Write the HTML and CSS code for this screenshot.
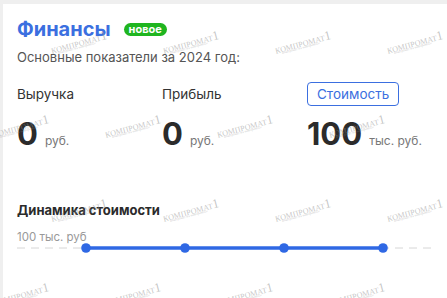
FILE: index.html
```html
<!DOCTYPE html>
<html lang="ru">
<head>
    <meta charset="UTF-8">
    <meta name="viewport" content="width=device-width, initial-scale=1.0">
    <title>Финансы</title>
    <link rel="stylesheet" href="styles.css">
</head>
<body>
    <div class="card">
        <div class="titleRow">
            <h1>Финансы</h1>
            <span class="badge">новое</span>
        </div>
        <p class="subtitle">Основные показатели за 2024 год:</p>

        <div class="stats">
            <div class="stat">
                <div class="statHead"><span class="label">Выручка</span></div>
                <div class="value"><b>0</b><span>руб.</span></div>
            </div>
            <div class="stat">
                <div class="statHead"><span class="label">Прибыль</span></div>
                <div class="value"><b>0</b><span>руб.</span></div>
            </div>
            <div class="stat">
                <div class="statHead"><button class="tab">Стоимость</button></div>
                <div class="value"><b>100</b><span>тыс. руб.</span></div>
            </div>
        </div>

        <h2 class="chartTitle">Динамика стоимости</h2>
        <div class="chart">
            <span class="axisLabel">100 тыс. руб</span>
            <svg class="chartSvg" width="430" height="20" viewBox="0 0 430 20">
                <line x1="0" y1="10" x2="418" y2="10" stroke="#d6d6d6" stroke-width="1" stroke-dasharray="8 6"/>
                <line x1="69" y1="10" x2="366" y2="10" stroke="#2f68e4" stroke-width="3.5"/>
                <circle cx="69" cy="10" r="4.8" fill="#2f68e4"/>
                <circle cx="168" cy="10" r="4.8" fill="#2f68e4"/>
                <circle cx="267" cy="10" r="4.8" fill="#2f68e4"/>
                <circle cx="366" cy="10" r="4.8" fill="#2f68e4"/>
            </svg>
        </div>
    </div>

    <div class="marks">
        <div class="markRow odd">
            <span class="mark">КОМПРОМАТ<i>1</i><small>компромат на компромисс</small></span>
            <span class="mark">КОМПРОМАТ<i>1</i><small>компромат на компромисс</small></span>
            <span class="mark">КОМПРОМАТ<i>1</i><small>компромат на компромисс</small></span>
            <span class="mark">КОМПРОМАТ<i>1</i><small>компромат на компромисс</small></span>
        </div>
        <div class="markRow even">
            <span class="mark">КОМПРОМАТ<i>1</i><small>компромат на компромисс</small></span>
            <span class="mark">КОМПРОМАТ<i>1</i><small>компромат на компромисс</small></span>
            <span class="mark">КОМПРОМАТ<i>1</i><small>компромат на компромисс</small></span>
            <span class="mark">КОМПРОМАТ<i>1</i><small>компромат на компромисс</small></span>
        </div>
        <div class="markRow odd">
            <span class="mark">КОМПРОМАТ<i>1</i><small>компромат на компромисс</small></span>
            <span class="mark">КОМПРОМАТ<i>1</i><small>компромат на компромисс</small></span>
            <span class="mark">КОМПРОМАТ<i>1</i><small>компромат на компромисс</small></span>
            <span class="mark">КОМПРОМАТ<i>1</i><small>компромат на компромисс</small></span>
        </div>
        <div class="markRow even">
            <span class="mark">КОМПРОМАТ<i>1</i><small>компромат на компромисс</small></span>
            <span class="mark">КОМПРОМАТ<i>1</i><small>компромат на компромисс</small></span>
            <span class="mark">КОМПРОМАТ<i>1</i><small>компромат на компромисс</small></span>
            <span class="mark">КОМПРОМАТ<i>1</i><small>компромат на компромисс</small></span>
        </div>
    </div>
</body>
</html>
```

FILE: styles.css
```css
html, body {
    margin: 0;
    height: 100%;
    overflow: hidden;
}
body {
    background: #efefef;
    font-family: Inter, "Noto Sans", sans-serif;
    color: #333;
    position: relative;
}

.card {
    margin: 4px 0 0 3px;
    background: #fff;
    height: 100%;
    padding: 10px 14px 0 14px;
    box-sizing: border-box;
}

.titleRow {
    display: flex;
    align-items: center;
    gap: 13px;
    height: 30px;
}
h1 {
    margin: 0;
    font-size: 20px;
    font-weight: 700;
    color: #3b6fe0;
}
.badge {
    background: #1fb51f;
    color: #fff;
    font-size: 11px;
    font-weight: 700;
    line-height: 13px;
    padding: 0 5px;
    border-radius: 7px;
}
.subtitle {
    margin: 4px 0 0 0;
    font-size: 13px;
    color: #555;
    line-height: 18px;
}

.stats {
    display: grid;
    grid-template-columns: 145px 145px 145px;
    margin-top: 15px;
}
.statHead {
    height: 25px;
    display: flex;
    align-items: center;
}
.label {
    font-size: 13.5px;
    color: #333;
}
.tab {
    font-family: inherit;
    font-size: 13.5px;
    color: #3b6fe0;
    background: #fff;
    border: 1px solid #3b6fe0;
    border-radius: 4px;
    padding: 0 9px;
    height: 24px;
}
.value {
    margin-top: 11px;
    display: flex;
    align-items: baseline;
    gap: 7px;
}
.value b {
    font-size: 31px;
    font-weight: 700;
    color: #2b2b2b;
    line-height: 34px;
}
.value span {
    font-size: 12px;
    color: #777;
}

.chartTitle {
    margin: 51px 0 0 0;
    font-size: 13px;
    font-weight: 700;
    color: #2b2b2b;
}
.chart {
    margin-top: 12px;
    height: 40px;
}
.axisLabel {
    display: block;
    font-size: 11.5px;
    color: #999;
    line-height: 14px;
}
.chartSvg {
    display: block;
    margin-top: -6px;
}

/* watermark overlay */
.marks {
    position: absolute;
    top: 0;
    left: 0;
    width: 100%;
    height: 100%;
    overflow: hidden;
    pointer-events: none;
}
.markRow {
    display: flex;
    gap: 52px;
    height: 84px;
    align-items: center;
}
.markRow.odd {
    padding-left: 50px;
}
.markRow.even {
    margin-left: -8px;
}
.mark {
    flex: none;
    width: 60px;
    font-family: "Liberation Serif", serif;
    font-size: 8px;
    color: rgba(140, 140, 140, 0.5);
    transform: rotate(-15deg);
    white-space: nowrap;
    position: relative;
}
.mark i {
    font-style: normal;
    font-size: 13px;
}
.mark small {
    position: absolute;
    left: 6px;
    top: 11px;
    font-size: 3.5px;
}
```
